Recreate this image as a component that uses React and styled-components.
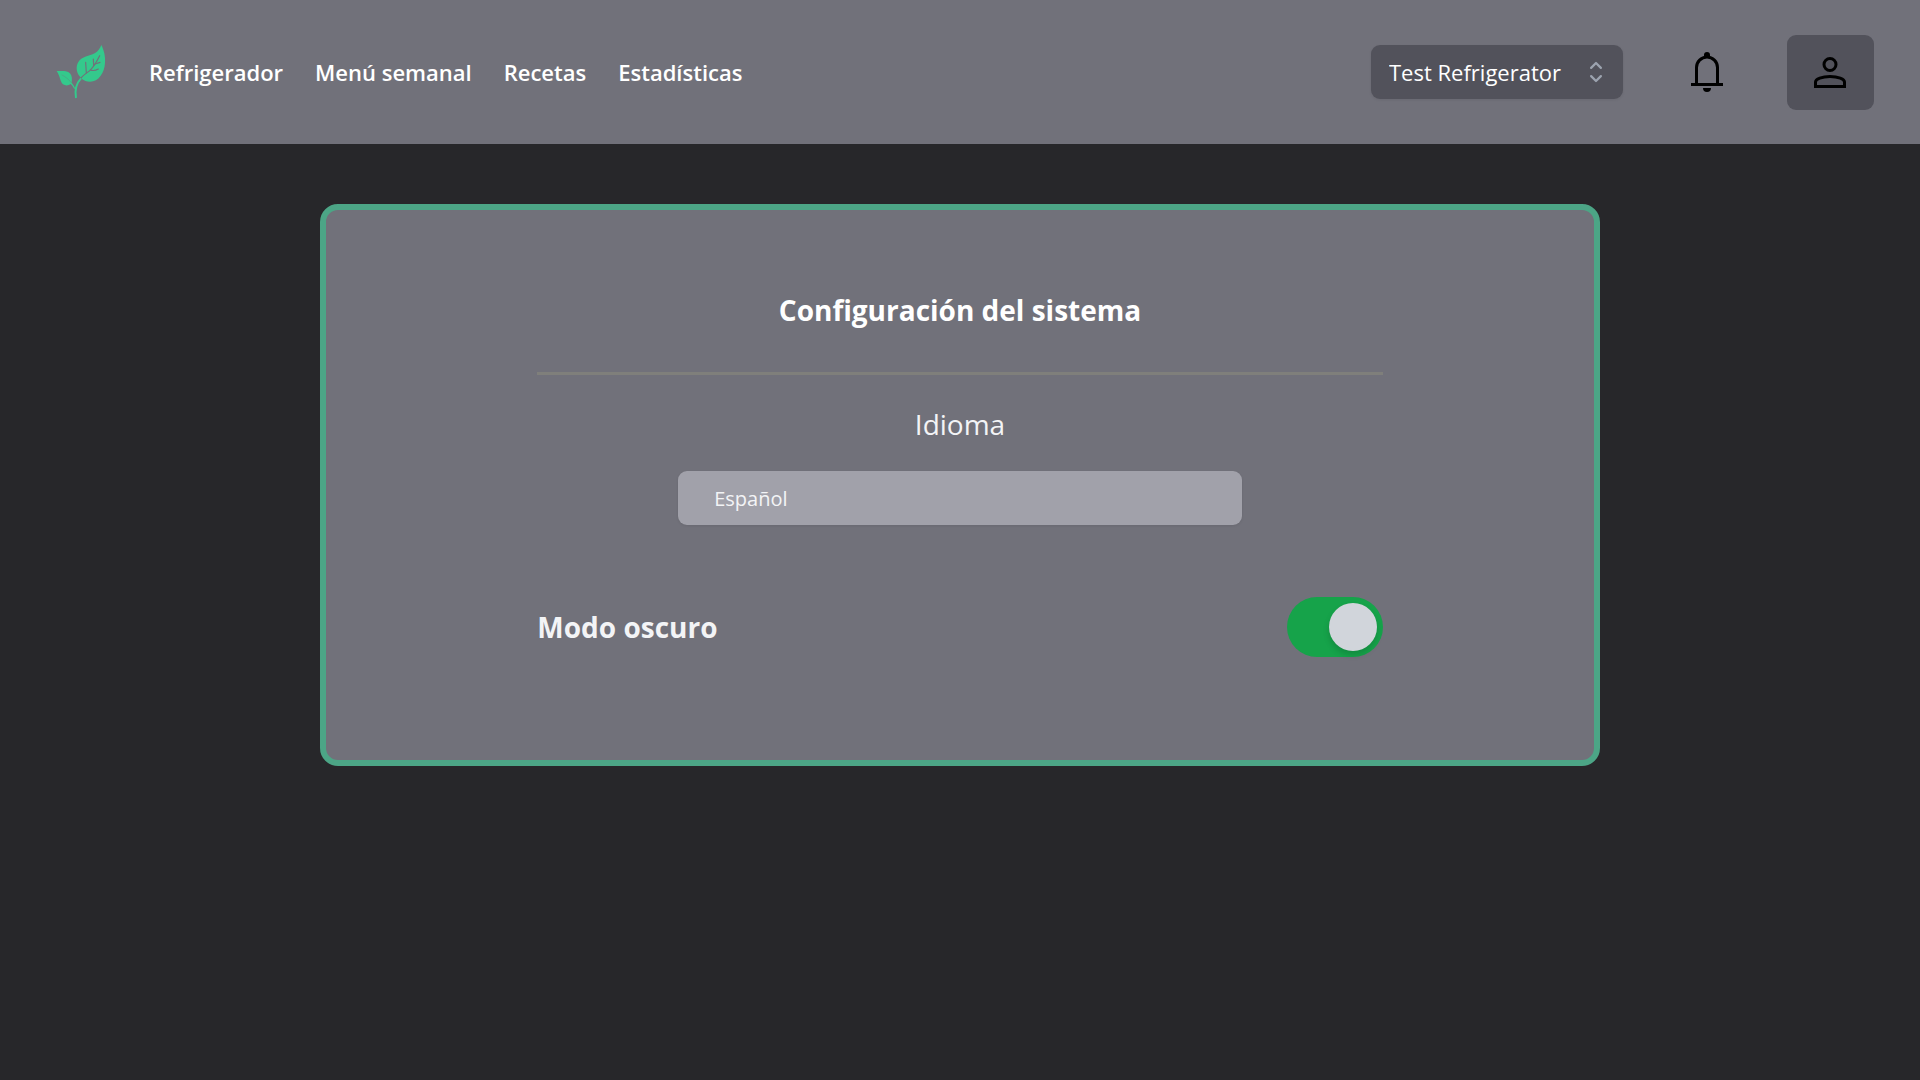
import React, { useState } from "react";
import styled, { createGlobalStyle } from "styled-components";

const GlobalStyle = createGlobalStyle`
  *, *::before, *::after { box-sizing: border-box; }
  body {
    margin: 0;
    background: #27272a;
    color: #fff;
    font-family: "Segoe UI", "Open Sans", "Noto Sans", sans-serif;
  }
  button, select, input { font: inherit; color: inherit; margin: 0; }
`;

const Header = styled.header`
  display: flex;
  align-items: center;
  justify-content: space-between;
  min-height: 144px;
  padding: 0 46px 0 56px;
  background: #71717a;
`;

const HeaderGroup = styled.div`
  display: flex;
  align-items: center;
  gap: ${({ $gap }) => $gap}px;
`;

const HomeLink = styled.a`
  display: flex;
`;

const Nav = styled.nav`
  display: flex;
  gap: 32px;
`;

const NavLink = styled.a`
  color: #fff;
  font-size: 22px;
  font-weight: 600;
  line-height: 36px;
  text-decoration: none;
`;

const SelectBox = styled.div`
  display: grid;
  align-items: center;
  width: ${({ $width }) => $width};

  > * { grid-area: 1 / 1; }
  > svg { justify-self: end; margin-right: 12px; pointer-events: none; }
`;

const Select = styled.select`
  appearance: none;
  width: 100%;
  height: 54px;
  padding: 0 ${({ $inset }) => $inset}px;
  border: 0;
  border-radius: 9px;
  background: ${({ $tone }) => $tone};
  color: ${({ $ink }) => $ink};
  font-size: ${({ $size }) => $size}px;
  box-shadow: 0 1px 3px rgba(0, 0, 0, 0.08);
`;

const IconButton = styled.button`
  display: flex;
  align-items: center;
  height: 75px;
  padding: 0 20px 0 19px;
  border: 0;
  border-radius: 9px;
  background: ${({ $filled }) => ($filled ? "#52525b" : "transparent")};
  color: #000;
`;

const Main = styled.main`
  display: flex;
  justify-content: center;
  padding: 60px 0;
`;

const Card = styled.section`
  display: flex;
  flex-direction: column;
  align-items: center;
  width: 66.667%;
  padding: 76px 0 103px;
  border: 6px solid #4ca586;
  border-radius: 18px;
  background: #71717a;
`;

const Content = styled.div`
  display: flex;
  flex-direction: column;
  align-items: center;
  width: 66.667%;
`;

const Title = styled.h1`
  margin: 0 0 38px;
  font-size: 28px;
  font-weight: 700;
  line-height: 48px;
`;

const Divider = styled.hr`
  width: 100%;
  height: 3px;
  margin: 0 0 25px;
  border: 0;
  background: #7f7f7b;
`;

const FieldLabel = styled.label`
  color: #f3f4f6;
  font-size: 28px;
  line-height: 48px;
  font-weight: ${({ $bold }) => ($bold ? 700 : 400)};
`;

const LanguageField = styled.div`
  display: flex;
  flex-direction: column;
  align-items: center;
  gap: 23px;
  width: 100%;
`;

const SwitchRow = styled.div`
  display: flex;
  align-items: center;
  justify-content: space-between;
  width: 100%;
  margin-top: 72px;
`;

const Switch = styled.input`
  appearance: none;
  display: flex;
  align-items: center;
  width: 96px;
  height: 60px;
  padding: 6px;
  border-radius: 30px;
  background: #52525b;

  &::before {
    content: "";
    width: 48px;
    height: 48px;
    border-radius: 50%;
    background: #d1d5db;
    box-shadow: 0 4px 6px rgba(0, 0, 0, 0.15);
  }

  &:checked {
    justify-content: flex-end;
    background: #16a34a;
  }
`;

const LeafLogo = () => (
  <svg width="52" height="56" viewBox="50 41 156 168" fill="none" aria-hidden="true">
    <path
      fill="#34c98c"
      d="M186 44C193 58 199 77 197 98C195 128 178 154 152 154C142 154 134 151 128 146L121 138C111 126 109 108 117 95C128 78 150 78 166 69C176 63 182 54 186 44Z"
    />
    <path
      fill="#34c98c"
      d="M52 122C66 123 84 119 93 130C99 138 98 147 97 157C100 160 104 166 107 173L105 177C101 169 98 164 94 161C88 166 78 167 71 162C62 154 63 138 52 122Z"
    />
    <path d="M126 142C134 132 144 127 152 120C162 110 171 96 181 76" stroke="#71717a" strokeWidth="3.5" strokeLinecap="round" />
    <path d="M141 128L139 96M153 119C162 122 170 120 177 116M163 106L162 86M167 101L182 96" stroke="#71717a" strokeWidth="3.5" strokeLinecap="round" />
    <path d="M68 134C80 140 89 148 95 156" stroke="#71717a" strokeWidth="1" strokeLinecap="round" />
    <path d="M110 203C106 181 109 161 125 144" stroke="#34c98c" strokeWidth="6" />
  </svg>
);

const ChevronsIcon = () => (
  <svg width="30" height="30" viewBox="0 0 20 20" fill="none" stroke="#9ca3af" strokeWidth="1.5" strokeLinecap="round" strokeLinejoin="round" aria-hidden="true">
    <path d="M6.75 7.25L10 4L13.25 7.25M13.25 12.75L10 16L6.75 12.75" />
  </svg>
);

const BellIcon = () => (
  <svg width="48" height="48" viewBox="0 0 48 48" fill="none" aria-hidden="true">
    <path d="M13.5 36V19.5A10.5 10.5 0 0 1 34.5 19.5V36" stroke="currentColor" strokeWidth="3" />
    <path d="M8 35H40V38H8ZM20 40H28A4 4 0 0 1 20 40ZM21 9V7A3 3 0 0 1 27 7V9Z" fill="currentColor" />
  </svg>
);

const UserIcon = () => (
  <svg width="48" height="48" viewBox="0 0 48 48" fill="none" stroke="currentColor" strokeWidth="3" aria-hidden="true">
    <circle cx="24" cy="16.5" r="6" />
    <path d="M9.5 38.5V34C9.5 31 16 28.5 24 28.5S38.5 31 38.5 34V38.5Z" />
  </svg>
);

const links = ["Refrigerador", "Menú semanal", "Recetas", "Estadísticas"];

export default function App() {
  const [dark, setDark] = useState(true);

  return (
    <>
      <GlobalStyle />
      <Header>
        <HeaderGroup $gap={41}>
          <HomeLink href="#" aria-label="Inicio"><LeafLogo /></HomeLink>
          <Nav>
            {links.map((label) => (
              <NavLink key={label} href="#">{label}</NavLink>
            ))}
          </Nav>
        </HeaderGroup>
        <HeaderGroup $gap={41}>
          <SelectBox $width="252px">
            <Select aria-label="Refrigerador" $inset={18} $size={22} $tone="#52525b" $ink="#fff">
              <option>Test Refrigerator</option>
            </Select>
            <ChevronsIcon />
          </SelectBox>
          <HeaderGroup $gap={36}>
            <IconButton aria-label="Notificaciones"><BellIcon /></IconButton>
            <IconButton aria-label="Perfil" $filled><UserIcon /></IconButton>
          </HeaderGroup>
        </HeaderGroup>
      </Header>
      <Main>
        <Card>
          <Content>
            <Title>Configuración del sistema</Title>
            <Divider />
            <LanguageField>
              <FieldLabel htmlFor="language">Idioma</FieldLabel>
              <SelectBox $width="66.667%">
                <Select id="language" $inset={36} $size={20} $tone="#a1a1aa" $ink="#f3f4f6">
                  <option>Español</option>
                </Select>
              </SelectBox>
            </LanguageField>
            <SwitchRow>
              <FieldLabel htmlFor="dark-mode" $bold>Modo oscuro</FieldLabel>
              <Switch id="dark-mode" type="checkbox" role="switch" checked={dark} onChange={(e) => setDark(e.target.checked)} />
            </SwitchRow>
          </Content>
        </Card>
      </Main>
    </>
  );
}
